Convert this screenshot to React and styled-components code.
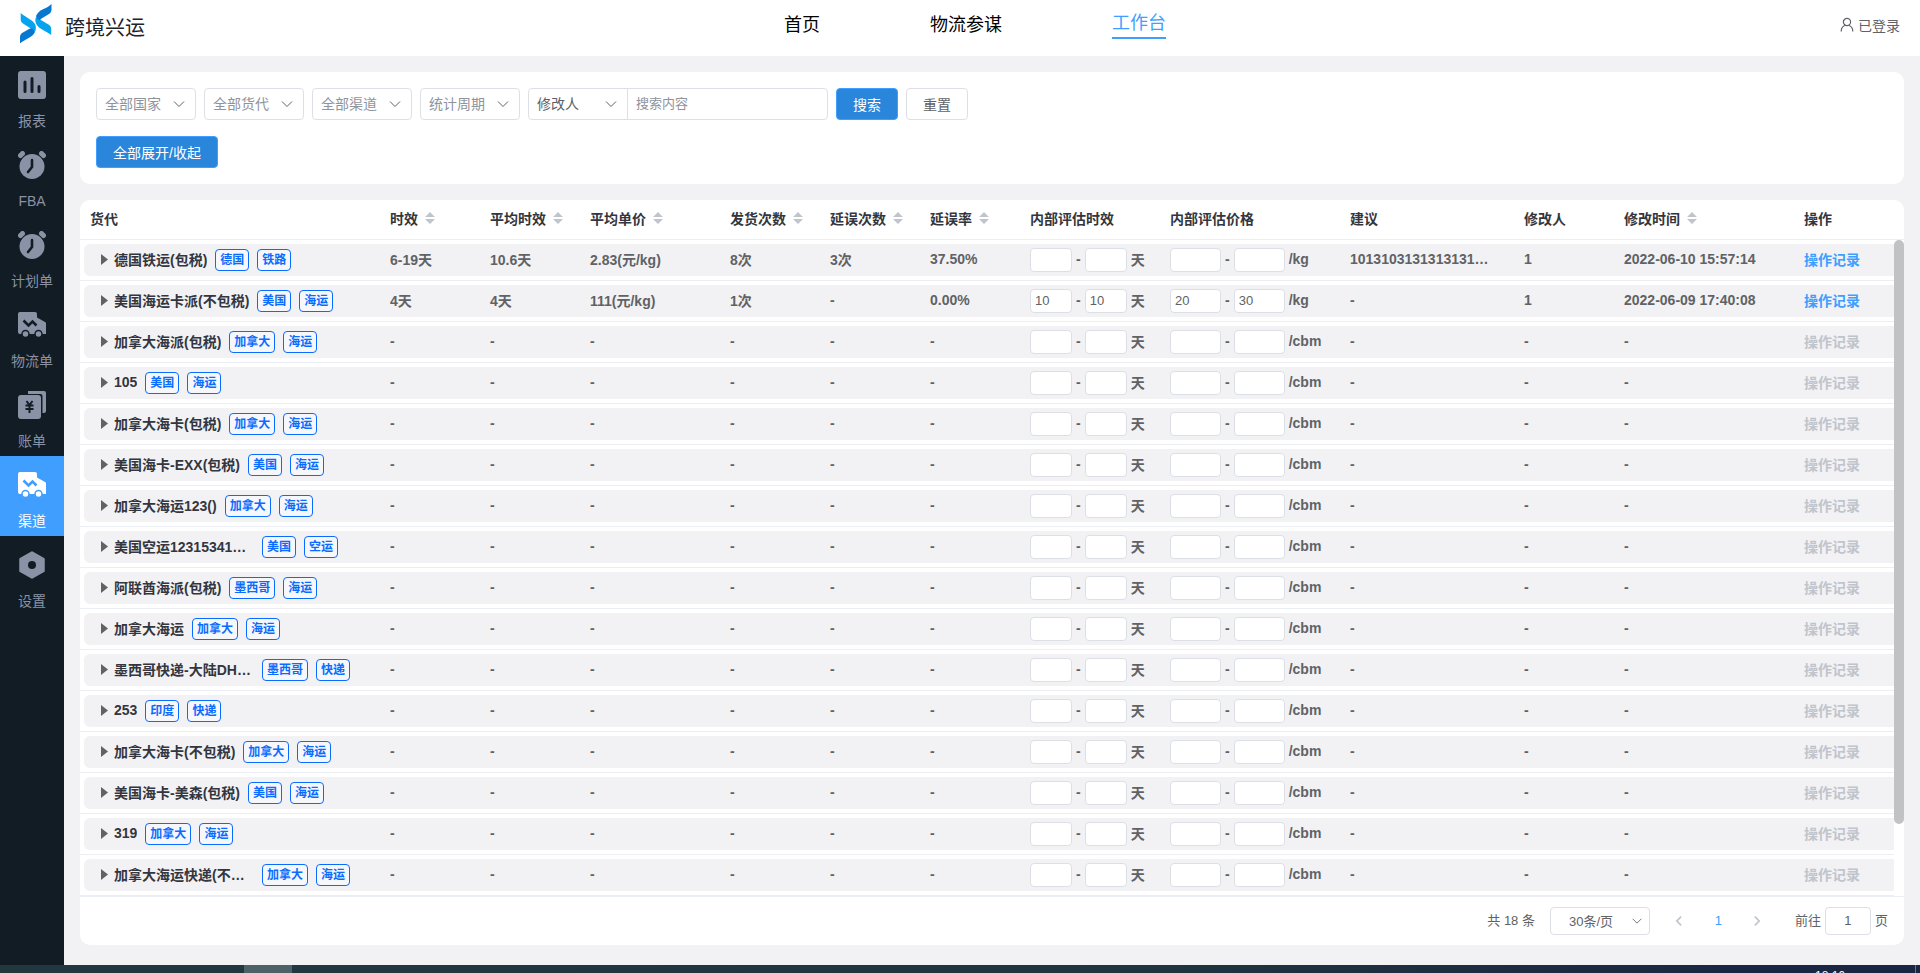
import React from "react";
import styled, { createGlobalStyle } from "styled-components";

const GlobalStyle = createGlobalStyle`
  * { box-sizing: border-box; }
  html, body, #root { height: 100%; }
  body {
    margin: 0;
    font-family: "Liberation Sans", "Noto Sans CJK SC", sans-serif;
    font-size: 14px;
    color: #606266;
    background: #f2f2f4;
  }
  button, input, select { font: inherit; color: inherit; }
`;

const Page = styled.div`
  display: flex;
  flex-direction: column;
  min-height: 100%;
`;

const Header = styled.header`
  display: flex;
  align-items: center;
  height: 56px;
  padding: 0 20px;
  background: #fff;
`;

const Brand = styled.div`
  flex: 1;
  display: flex;
  align-items: center;
  gap: 13px;
  padding-bottom: 8px;
`;

const BrandName = styled.span`
  padding-top: 4px;
  font-size: 20px;
  color: #1d2129;
`;

const Nav = styled.nav`
  display: flex;
  align-items: center;
  gap: 110px;
  padding: 0 0 6px 30px;
`;

const NavLink = styled.a`
  font-size: 18px;
  line-height: 24px;
  text-decoration: none;
  color: ${(p) => (p.$active ? "#409eff" : "#000")};
  ${(p) => p.$active && "padding-bottom: 2px; border-bottom: 2px solid #409eff;"}
`;

const User = styled.div`
  flex: 1;
  display: flex;
  align-items: center;
  justify-content: flex-end;
  gap: 4px;
  padding-bottom: 6px;
`;

const Body = styled.div`
  flex: 1;
  display: flex;
`;

const Sidebar = styled.nav`
  width: 64px;
  flex: none;
  background: #121c24;
`;

const SideLink = styled.a`
  display: flex;
  flex-direction: column;
  align-items: center;
  gap: 12px;
  height: 80px;
  padding-top: 15px;
  line-height: 20px;
  text-decoration: none;
  color: ${(p) => (p.$active ? "#fff" : "#8a92a6")};
  background: ${(p) => (p.$active ? "#409eff" : "transparent")};
  --hole: ${(p) => (p.$active ? "#409eff" : "#121c24")};
`;

const Main = styled.main`
  flex: 1;
  min-width: 0;
  display: flex;
  flex-direction: column;
  gap: 16px;
  padding: 16px 16px 20px;
`;

const Card = styled.section`
  background: #fff;
  border-radius: 10px;
`;

const FilterCard = styled(Card)`
  display: flex;
  flex-direction: column;
  align-items: flex-start;
  gap: 16px;
  padding: 16px;
`;

const FilterForm = styled.form`
  display: flex;
  gap: 8px;
`;

const SelectBox = styled.span`
  position: relative;
  display: inline-flex;
  svg {
    position: absolute;
    right: ${(p) => (p.$small ? 7 : 10)}px;
    top: 50%;
    margin-top: -7px;
    pointer-events: none;
  }
`;

const Select = styled.select`
  appearance: none;
  width: 100px;
  height: ${(p) => (p.$small ? 28 : 32)}px;
  padding: ${(p) => (p.$small ? "0 18px" : "0 8px")};
  font-size: ${(p) => (p.$small ? 13 : 14)}px;
  border: 1px solid #dcdfe6;
  border-radius: ${(p) => (p.$joined ? "4px 0 0 4px" : "4px")};
  background: #fff;
  color: ${(p) => (p.$dark ? "#606266" : "#8f939b")};
`;

const SearchGroup = styled.div`
  display: flex;
`;

const SearchInput = styled.input`
  width: 201px;
  height: 32px;
  margin-left: -1px;
  padding: 0 8px 2px;
  font-size: 13px;
  border: 1px solid #dcdfe6;
  border-radius: 0 4px 4px 0;
  &::placeholder { color: #8f939b; }
`;

const Button = styled.button`
  height: 32px;
  padding: 0 16px;
  border: 1px solid ${(p) => (p.$primary ? "#409eff" : "#dcdfe6")};
  border-radius: 4px;
  background: ${(p) => (p.$primary ? "#2a86da" : "#fff")};
  color: ${(p) => (p.$primary ? "#fff" : "#606266")};
`;

const TableCard = styled(Card)`
  flex: 1;
  display: flex;
  flex-direction: column;
`;

const TableArea = styled.div`
  display: flex;
  border-bottom: 1px solid #ebeef5;
`;

const TableWrap = styled.div`
  flex: 1;
  min-width: 0;
`;

const Table = styled.table`
  width: 100%;
  table-layout: fixed;
  border-collapse: separate;
  border-spacing: 0;
  font-weight: bold;
`;

const Col = styled.col`
  width: ${(p) => (p.$w ? `${p.$w}px` : "auto")};
`;

const Th = styled.th`
  height: 40px;
  padding: 0 10px 4px;
  text-align: left;
  white-space: nowrap;
  color: #33363f;
  border-bottom: 1px solid #ebeef5;
`;

const SortLabel = styled.span`
  display: inline-flex;
  align-items: center;
  gap: 7px;
`;

const Td = styled.td`
  height: 41px;
  padding: 4px 0;
  border-bottom: 1px solid #ebeef5;
  &:first-child { padding-left: 4px; }
  &:first-child > div { border-radius: 6px 0 0 6px; padding-left: 17px; }
`;

const Cell = styled.div`
  display: flex;
  align-items: center;
  height: 32px;
  padding: 0 10px 2px;
  white-space: nowrap;
  background: #f2f2f4;
`;

const NameCell = styled(Cell)`
  gap: 8px;
  padding: 0 10px;
  color: #33363f;
`;

const Expand = styled.button`
  display: flex;
  margin-right: -2px;
  padding: 0;
  border: 0;
  background: none;
`;

const Name = styled.span`
  max-width: 140px;
  padding-bottom: 2px;
  overflow: hidden;
  text-overflow: ellipsis;
`;

const Tag = styled.span`
  height: 22px;
  padding: 0 4px;
  border: 1px solid #0a6cff;
  border-radius: 4px;
  font-size: 12px;
  line-height: 20px;
  color: #0a6cff;
  background: #f5f7fb;
`;

const Clip = styled.span`
  max-width: 140px;
  overflow: hidden;
  text-overflow: ellipsis;
`;

const RangeCell = styled(Cell)`
  gap: 4px;
  padding: 0 10px;
`;

const RangeText = styled.span`
  padding-bottom: 2px;
`;

const RangeInput = styled.input`
  width: ${(p) => p.$w}px;
  height: 24px;
  padding: 0 4px 2px;
  font-size: 13px;
  font-weight: normal;
  border: 1px solid #dcdfe6;
  border-radius: 4px;
  background: #fff;
`;

const Action = styled.button`
  padding: 0;
  border: 0;
  background: none;
  font-weight: bold;
  color: #409eff;
  &:disabled { color: #c0c4cc; }
`;

const ScrollTrack = styled.div`
  width: 10px;
  flex: none;
  display: flex;
  flex-direction: column;
`;

const TrackHead = styled.div`
  height: 40px;
  flex: none;
  border-bottom: 1px solid #ebeef5;
`;

const TrackBody = styled.div`
  flex: 1;
`;

const Thumb = styled.div`
  height: 89%;
  border-radius: 5px;
  background: #c1c2c4;
`;

const Pagination = styled.footer`
  flex: 1;
  display: flex;
  align-items: flex-start;
  justify-content: flex-end;
  padding: 10px 16px;
  font-size: 13px;
  line-height: 28px;
`;

const Total = styled.span`
  margin-right: 15px;
`;

const Pager = styled.div`
  display: flex;
  margin: 0 18px 0 10px;
`;

const PageButton = styled.button`
  display: flex;
  align-items: center;
  justify-content: center;
  width: 39px;
  height: 28px;
  padding: 0;
  border: 0;
  background: none;
  color: ${(p) => (p.$current ? "#409eff" : "#c0c4cc")};
`;

const Jump = styled.label`
  display: flex;
  gap: 4px;
`;

const JumpInput = styled.input`
  width: 46px;
  height: 28px;
  border: 1px solid #dcdfe6;
  border-radius: 4px;
  text-align: center;
`;

const Taskbar = styled.div`
  display: flex;
  height: 8px;
  flex: none;
  overflow: hidden;
  background: linear-gradient(90deg, #22383f, #20343f 60%, #1b2742 90%);
`;

const TaskItem = styled.div`
  width: 48px;
  margin-left: 244px;
  background: #4e6068;
`;

const Clock = styled.div`
  margin: 4px 70px 0 auto;
  font-size: 12px;
  line-height: 14px;
  color: #fff;
`;

const TaskEdge = styled.div`
  width: 1px;
  margin-right: 4px;
  background: #6b7488;
`;

const Logo = () => (
  <svg width="32" height="40" viewBox="0 0 32 40" aria-hidden="true">
    <path d="M15.500 14c1-1.500 2.500-1 4.500 1.500l8.500 5c2 1.300 2.700 2.500 2.700 5V31c-3-2.500-8-4.500-11.500-7-3.500-2.700-5-6-4.200-10z" fill="#06a4ee" />
    <path d="M31.500 0v5.500c0 2-1 3.500-2.500 4.500l-7.500 4.500c-1 .7-1.500 1.200-1.500 2-2-.7-3.500-2.500-4-4.500 1-2.300 2.500-4 4.500-5.500C24.500 4.500 28.500 3 31.500 0z" fill="#0678cf" />
    <path d="M.700 9c3 2.800 7.500 5 11 7.500 4 3 5.500 7 3 12-1-2.500-3-3.500-5.500-5L3 19.500C1.200 18.300.700 17 .700 15z" fill="#06a4ee" />
    <path d="M0 39.500V33c0-2 1-3.300 2.500-4.300l7-4c1-.5 1.700-.7 2.500-.2 1.500.8 2.500 2.200 2.700 4-1.500 3-4 4.500-7 6-3 1.700-5.500 3-7.700 5z" fill="#0678cf" />
  </svg>
);

const ReportIcon = () => (
  <svg width="28" height="28" viewBox="0 0 28 28" aria-hidden="true">
    <rect width="28" height="28" rx="3" fill="currentColor" />
    <path d="M7 11v9.500M14 7.500v13M21 15.500v5" stroke="var(--hole)" strokeWidth="3" strokeLinecap="round" />
  </svg>
);

const AlarmIcon = () => (
  <svg width="28" height="28" viewBox="0 0 28 28" aria-hidden="true">
    <circle cx="14" cy="15.500" r="12.500" fill="currentColor" />
    <path d="M2.500 4.500l2-2M25.500 4.500l-2-2" stroke="currentColor" strokeWidth="5" strokeLinecap="round" />
    <path d="M14 9v7l-4 5" fill="none" stroke="var(--hole)" strokeWidth="2.600" strokeLinecap="round" strokeLinejoin="round" />
  </svg>
);

const TruckIcon = () => (
  <svg width="28" height="28" viewBox="0 0 28 28" aria-hidden="true">
    <path d="M2 1h15a2 2 0 0 1 2 2v3.500l8 4.500a2 2 0 0 1 1 2V23H2a2 2 0 0 1-2-2V3a2 2 0 0 1 2-2z" fill="currentColor" />
    <path d="M5.500 9.500l5 5 4-4 4 4" fill="none" stroke="var(--hole)" strokeWidth="2.600" />
    <circle cx="7.500" cy="23" r="3.500" fill="currentColor" stroke="var(--hole)" strokeWidth="1.500" />
    <circle cx="20.500" cy="23" r="3.500" fill="currentColor" stroke="var(--hole)" strokeWidth="1.500" />
  </svg>
);

const BillIcon = () => (
  <svg width="28" height="28" viewBox="0 0 28 28" aria-hidden="true">
    <path d="M10 0h16a2 2 0 0 1 2 2v18a2 2 0 0 1-2 2h-1.500V5a2 2 0 0 0-2-2H10z" fill="currentColor" />
    <rect y="4" width="23" height="24" rx="3" fill="currentColor" />
    <path d="M8.500 10l3 4 3-4M7.500 14.500h8M7.500 18h8M11.500 14v8" fill="none" stroke="var(--hole)" strokeWidth="2" />
  </svg>
);

const SettingIcon = () => (
  <svg width="28" height="28" viewBox="0 0 28 28" aria-hidden="true">
    <path d="M14 1.500l11.500 6.500v12L14 26.500 2.500 20V8z" fill="currentColor" stroke="currentColor" strokeWidth="2.500" strokeLinejoin="round" />
    <circle cx="14" cy="14" r="4" fill="var(--hole)" />
  </svg>
);

const UserIcon = () => (
  <svg width="14" height="16" viewBox="0 0 14 16" fill="none" stroke="currentColor" strokeWidth="1.200" aria-hidden="true">
    <circle cx="7" cy="5" r="3.600" />
    <path d="M1.200 14.500c0-3.500 2-5.500 4.200-6.200M12.800 14.500c0-3.500-2-5.500-4.200-6.200" />
  </svg>
);

const Chevron = ({ size = 14, rotate = 0 }) => (
  <svg width={size} height="14" viewBox="0 0 14 14" fill="none" stroke="currentColor" aria-hidden="true">
    <path d="M2 4.500l5 5 5-5" transform={`rotate(${rotate} 7 7)`} strokeWidth={rotate ? 2 : 1} />
  </svg>
);

const SortIcon = () => (
  <svg width="10" height="14" viewBox="0 0 10 14" fill="#c0c4cc" aria-hidden="true">
    <path d="M0 6l5-5 5 5zM0 8l5 5 5-5z" />
  </svg>
);

const SIDE = [
  ["报表", ReportIcon],
  ["FBA", AlarmIcon],
  ["计划单", AlarmIcon],
  ["物流单", TruckIcon],
  ["账单", BillIcon],
  ["渠道", TruckIcon],
  ["设置", SettingIcon],
];

const COLUMNS = [
  ["货代", 300],
  ["时效", 100, true],
  ["平均时效", 100, true],
  ["平均单价", 140, true],
  ["发货次数", 100, true],
  ["延误次数", 100, true],
  ["延误率", 100, true],
  ["内部评估时效", 140],
  ["内部评估价格", 180],
  ["建议", 0],
  ["修改人", 100],
  ["修改时间", 180, true],
  ["操作", 100],
];

const EMPTY = { stats: ["-", "-", "-", "-", "-", "-"], days: ["", ""], price: ["", ""], unit: "/cbm", advice: "-", editor: "-", time: "-" };

const ROWS = [
  {
    name: "德国铁运(包税)", tags: ["德国", "铁路"], active: true,
    stats: ["6-19天", "10.6天", "2.83(元/kg)", "8次", "3次", "37.50%"],
    days: ["", ""], price: ["", ""], unit: "/kg",
    advice: "1013103131313131313", editor: "1", time: "2022-06-10 15:57:14",
  },
  {
    name: "美国海运卡派(不包税)", tags: ["美国", "海运"], active: true,
    stats: ["4天", "4天", "111(元/kg)", "1次", "-", "0.00%"],
    days: ["10", "10"], price: ["20", "30"], unit: "/kg",
    advice: "-", editor: "1", time: "2022-06-09 17:40:08",
  },
  { ...EMPTY, name: "加拿大海派(包税)", tags: ["加拿大", "海运"] },
  { ...EMPTY, name: "105", tags: ["美国", "海运"] },
  { ...EMPTY, name: "加拿大海卡(包税)", tags: ["加拿大", "海运"] },
  { ...EMPTY, name: "美国海卡-EXX(包税)", tags: ["美国", "海运"] },
  { ...EMPTY, name: "加拿大海运123()", tags: ["加拿大", "海运"] },
  { ...EMPTY, name: "美国空运12315341包税", tags: ["美国", "空运"] },
  { ...EMPTY, name: "阿联酋海派(包税)", tags: ["墨西哥", "海运"] },
  { ...EMPTY, name: "加拿大海运", tags: ["加拿大", "海运"] },
  { ...EMPTY, name: "墨西哥快递-大陆DHL()", tags: ["墨西哥", "快递"] },
  { ...EMPTY, name: "253", tags: ["印度", "快递"] },
  { ...EMPTY, name: "加拿大海卡(不包税)", tags: ["加拿大", "海运"] },
  { ...EMPTY, name: "美国海卡-美森(包税)", tags: ["美国", "海运"] },
  { ...EMPTY, name: "319", tags: ["加拿大", "海运"] },
  { ...EMPTY, name: "加拿大海运快递(不包税)", tags: ["加拿大", "海运"] },
];

const Range = ({ values, unit, width, label }) => (
  <RangeCell>
    <RangeInput $w={width} defaultValue={values[0]} aria-label={`${label} 最小值`} />
    <RangeText>-</RangeText>
    <RangeInput $w={width} defaultValue={values[1]} aria-label={`${label} 最大值`} />
    <RangeText>{unit}</RangeText>
  </RangeCell>
);

const FilterSelect = ({ label, ...rest }) => (
  <SelectBox>
    <Select aria-label={label} {...rest}>
      <option>{label}</option>
    </Select>
    <Chevron />
  </SelectBox>
);

const Row = ({ row }) => (
  <tr>
    <Td>
      <NameCell>
        <Expand type="button" aria-label={`展开 ${row.name}`}>
          <svg width="7" height="12" viewBox="0 0 7 12" fill="#606266" aria-hidden="true">
            <path d="M0 0l7 5.500L0 11z" />
          </svg>
        </Expand>
        <Name>{row.name}</Name>
        {row.tags.map((t) => <Tag key={t}>{t}</Tag>)}
      </NameCell>
    </Td>
    {row.stats.map((s, i) => <Td key={i}><Cell>{s}</Cell></Td>)}
    <Td><Range values={row.days} unit="天" width={42} label={`${row.name} 时效`} /></Td>
    <Td><Range values={row.price} unit={row.unit} width={51} label={`${row.name} 价格`} /></Td>
    <Td><Cell><Clip>{row.advice}</Clip></Cell></Td>
    <Td><Cell>{row.editor}</Cell></Td>
    <Td><Cell>{row.time}</Cell></Td>
    <Td><Cell><Action type="button" disabled={!row.active}>操作记录</Action></Cell></Td>
  </tr>
);

export default function App() {
  return (
    <Page>
      <GlobalStyle />
      <Header>
        <Brand><Logo /><BrandName>跨境兴运</BrandName></Brand>
        <Nav>
          <NavLink href="#home">首页</NavLink>
          <NavLink href="#advisor">物流参谋</NavLink>
          <NavLink href="#workbench" $active>工作台</NavLink>
        </Nav>
        <User><UserIcon />已登录</User>
      </Header>
      <Body>
        <Sidebar>
          {SIDE.map(([label, Icon]) => (
            <SideLink key={label} href={`#${label}`} $active={label === "渠道"}>
              <Icon />
              {label}
            </SideLink>
          ))}
        </Sidebar>
        <Main>
          <FilterCard>
            <FilterForm onSubmit={(e) => e.preventDefault()}>
              <FilterSelect label="全部国家" />
              <FilterSelect label="全部货代" />
              <FilterSelect label="全部渠道" />
              <FilterSelect label="统计周期" />
              <SearchGroup>
                <FilterSelect label="修改人" $dark $joined />
                <SearchInput placeholder="搜索内容" aria-label="搜索内容" />
              </SearchGroup>
              <Button $primary type="submit">搜索</Button>
              <Button type="reset">重置</Button>
            </FilterForm>
            <Button $primary type="button">全部展开/收起</Button>
          </FilterCard>
          <TableCard>
            <TableArea>
              <TableWrap>
                <Table>
                  <colgroup>
                    {COLUMNS.map(([label, w]) => <Col key={label} $w={w} />)}
                  </colgroup>
                  <thead>
                    <tr>
                      {COLUMNS.map(([label, , sortable]) => (
                        <Th key={label}>
                          <SortLabel>{label}{sortable && <SortIcon />}</SortLabel>
                        </Th>
                      ))}
                    </tr>
                  </thead>
                  <tbody>
                    {ROWS.map((row) => <Row key={row.name} row={row} />)}
                  </tbody>
                </Table>
              </TableWrap>
              <ScrollTrack>
                <TrackHead />
                <TrackBody><Thumb /></TrackBody>
              </ScrollTrack>
            </TableArea>
            <Pagination>
              <Total>共 18 条</Total>
              <SelectBox $small>
                <Select $small $dark aria-label="每页条数"><option>30条/页</option></Select>
                <Chevron size={12} />
              </SelectBox>
              <Pager>
                <PageButton type="button" aria-label="上一页"><Chevron size={12} rotate={90} /></PageButton>
                <PageButton type="button" $current>1</PageButton>
                <PageButton type="button" aria-label="下一页"><Chevron size={12} rotate={-90} /></PageButton>
              </Pager>
              <Jump>前往<JumpInput defaultValue="1" />页</Jump>
            </Pagination>
          </TableCard>
        </Main>
      </Body>
      <Taskbar>
        <TaskItem />
        <Clock>18:16</Clock>
        <TaskEdge />
      </Taskbar>
    </Page>
  );
}
